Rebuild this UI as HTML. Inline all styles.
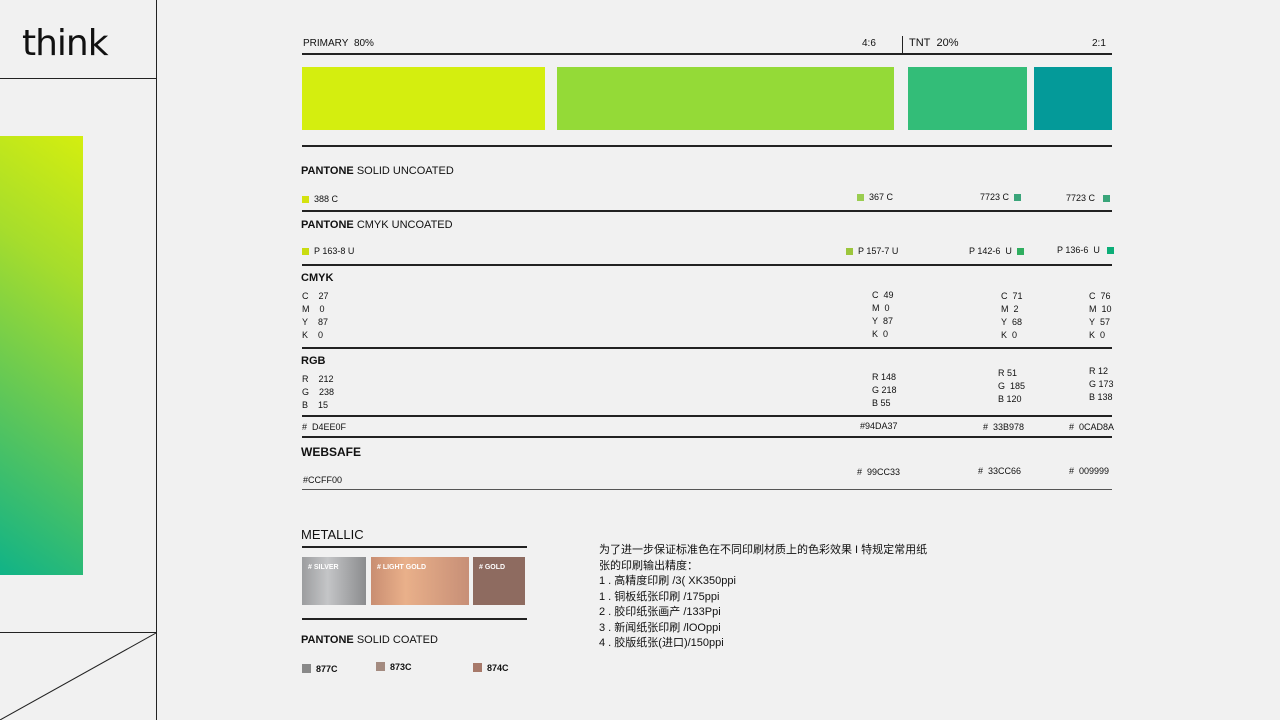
<!DOCTYPE html>
<html><head><meta charset="utf-8"><style>
body{margin:0;width:1280px;height:720px;background:#f1f1f1;position:relative;overflow:hidden;font-family:"Liberation Sans","Noto Sans CJK SC",sans-serif;color:#111}
.a{position:absolute;white-space:nowrap}
.l{position:absolute;background:#222}
.t{font-size:9px}
.h{font-size:11px}
.h b{font-weight:bold}
.sq{display:inline-block;width:7px;height:7px;vertical-align:-1px}
.c{font-size:9px;line-height:13px}
</style></head><body>
<div class="l" style="left:156px;top:0;width:1px;height:720px"></div>
<div class="l" style="left:0;top:78px;width:156px;height:1px"></div>
<div class="l" style="left:0;top:632px;width:156px;height:1px"></div>
<svg class="a" style="left:0;top:632px" width="157" height="88"><line x1="0" y1="88" x2="156" y2="1" stroke="#222" stroke-width="1"/></svg>
<div class="a" style="left:22px;top:20px;font-size:36px;line-height:48px;font-family:'DejaVu Sans',sans-serif;font-weight:normal;letter-spacing:-1px">think</div>
<div class="a" style="left:0;top:136px;width:83px;height:439px;background:linear-gradient(215deg,#d4ee0f 0%,#a6dd2c 30%,#5cc65a 65%,#10b387 100%)"></div>

<div class="a t" style="left:303px;top:38px;font-size:10px">PRIMARY&nbsp; 80%</div>
<div class="a t" style="left:862px;top:38px;font-size:10px">4:6</div>
<div class="l" style="left:902px;top:36px;width:1px;height:18px"></div>
<div class="a t" style="left:909px;top:37px;font-size:11px">TNT&nbsp; 20%</div>
<div class="a t" style="left:1092px;top:38px;font-size:10px">2:1</div>
<div class="l" style="left:302px;top:53px;width:810px;height:2px"></div>
<div class="a" style="left:302px;top:67px;width:243px;height:63px;background:#d4ee0f"></div>
<div class="a" style="left:557px;top:67px;width:337px;height:63px;background:#94da37"></div>
<div class="a" style="left:908px;top:67px;width:119px;height:63px;background:#33bd78"></div>
<div class="a" style="left:1034px;top:67px;width:78px;height:63px;background:#049a99"></div>
<div class="l" style="left:302px;top:145px;width:810px;height:1.5px"></div>

<div class="a h" style="left:301px;top:165px"><b>PANTONE</b> SOLID UNCOATED</div>
<div class="a t" style="left:302px;top:194px"><span class="sq" style="background:#d4e20f"></span>&nbsp; 388 C</div>
<div class="a t" style="left:857px;top:192px"><span class="sq" style="background:#9acd50"></span>&nbsp; 367 C</div>
<div class="a t" style="left:980px;top:192px">7723 C&nbsp; <span class="sq" style="background:#3aa57a"></span></div>
<div class="a t" style="left:1066px;top:193px">7723 C&nbsp;&nbsp; <span class="sq" style="background:#3aa57a"></span></div>
<div class="l" style="left:302px;top:210px;width:810px;height:1.5px"></div>

<div class="a h" style="left:301px;top:219px"><b>PANTONE</b> CMYK UNCOATED</div>
<div class="a t" style="left:302px;top:246px"><span class="sq" style="background:#c9dc10"></span>&nbsp; P 163-8 U</div>
<div class="a t" style="left:846px;top:246px"><span class="sq" style="background:#9cc63c"></span>&nbsp; P 157-7 U</div>
<div class="a t" style="left:969px;top:246px">P 142-6&nbsp; U&nbsp; <span class="sq" style="background:#2fae5f"></span></div>
<div class="a t" style="left:1057px;top:245px">P 136-6&nbsp; U&nbsp;&nbsp; <span class="sq" style="background:#0cae78"></span></div>
<div class="l" style="left:302px;top:264px;width:810px;height:1.5px"></div>

<div class="a h" style="left:301px;top:272px;font-weight:bold">CMYK</div>
<div class="a c" style="left:302px;top:290px">C&nbsp;&nbsp;&nbsp; 27<br>M&nbsp;&nbsp;&nbsp; 0<br>Y&nbsp;&nbsp;&nbsp; 87<br>K&nbsp;&nbsp;&nbsp; 0</div>
<div class="a c" style="left:872px;top:289px">C&nbsp; 49<br>M&nbsp; 0<br>Y&nbsp; 87<br>K&nbsp; 0</div>
<div class="a c" style="left:1001px;top:290px">C&nbsp; 71<br>M&nbsp; 2<br>Y&nbsp; 68<br>K&nbsp; 0</div>
<div class="a c" style="left:1089px;top:290px">C&nbsp; 76<br>M&nbsp; 10<br>Y&nbsp; 57<br>K&nbsp; 0</div>
<div class="l" style="left:302px;top:347px;width:810px;height:1.5px"></div>

<div class="a h" style="left:301px;top:355px;font-weight:bold">RGB</div>
<div class="a c" style="left:302px;top:373px">R&nbsp;&nbsp;&nbsp; 212<br>G&nbsp;&nbsp;&nbsp; 238<br>B&nbsp;&nbsp;&nbsp; 15</div>
<div class="a c" style="left:872px;top:371px">R 148<br>G 218<br>B 55</div>
<div class="a c" style="left:998px;top:367px">R 51<br>G&nbsp; 185<br>B 120</div>
<div class="a c" style="left:1089px;top:365px">R 12<br>G 173<br>B 138</div>
<div class="l" style="left:302px;top:415px;width:810px;height:1.5px"></div>
<div class="a t" style="left:302px;top:422px">#&nbsp; D4EE0F</div>
<div class="a t" style="left:860px;top:421px">#94DA37</div>
<div class="a t" style="left:983px;top:422px">#&nbsp; 33B978</div>
<div class="a t" style="left:1069px;top:422px">#&nbsp; 0CAD8A</div>
<div class="l" style="left:302px;top:436px;width:810px;height:2px"></div>

<div class="a h" style="left:301px;top:445px;font-weight:bold;font-size:12px">WEBSAFE</div>
<div class="a t" style="left:303px;top:475px">#CCFF00</div>
<div class="a t" style="left:857px;top:467px">#&nbsp; 99CC33</div>
<div class="a t" style="left:978px;top:466px">#&nbsp; 33CC66</div>
<div class="a t" style="left:1069px;top:466px">#&nbsp; 009999</div>
<div class="l" style="left:302px;top:489px;width:810px;height:1px;background:#555"></div>

<div class="a" style="left:301px;top:527px;font-size:13px">METALLIC</div>
<div class="l" style="left:302px;top:546px;width:225px;height:1.5px"></div>
<div class="a" style="left:302px;top:557px;width:64px;height:48px;background:linear-gradient(90deg,#9c9d9f,#c4c5c7 40%,#8b8c8e)"></div>
<div class="a" style="left:371px;top:557px;width:98px;height:48px;background:linear-gradient(90deg,#c98e72,#e9b08a 35%,#c78f77)"></div>
<div class="a" style="left:473px;top:557px;width:52px;height:48px;background:#8e6b60"></div>
<div class="a" style="left:308px;top:564px;font-size:7px;color:#fff;font-weight:bold">#&nbsp;SILVER</div>
<div class="a" style="left:377px;top:564px;font-size:7px;color:#fff;font-weight:bold">#&nbsp;LIGHT GOLD</div>
<div class="a" style="left:479px;top:564px;font-size:7px;color:#fff;font-weight:bold">#&nbsp;GOLD</div>
<div class="l" style="left:302px;top:618px;width:225px;height:1.5px"></div>
<div class="a h" style="left:301px;top:634px"><b>PANTONE</b> SOLID COATED</div>
<div class="a t" style="left:302px;top:664px;font-weight:bold"><span class="sq" style="background:#898989;width:9px;height:9px"></span>&nbsp; 877C</div>
<div class="a t" style="left:376px;top:662px;font-weight:bold"><span class="sq" style="background:#a48b80;width:9px;height:9px"></span>&nbsp; 873C</div>
<div class="a t" style="left:473px;top:663px;font-weight:bold"><span class="sq" style="background:#a7796a;width:9px;height:9px"></span>&nbsp; 874C</div>

<div class="a" style="left:599px;top:543px;font-size:11px;line-height:15.5px;color:#111">为了进一步保证标准色在不同印刷材质上的色彩效果 I 特规定常用纸<br>张的印刷输出精度：<br>1 . 高精度印刷 /3( XK350ppi<br>1 . 铜板纸张印刷 /175ppi<br>2 . 胶印纸张画产 /133Ppi<br>3 . 新闻纸张印刷 /lOOppi<br>4 . 胶版纸张(进口)/150ppi</div>
</body></html>
